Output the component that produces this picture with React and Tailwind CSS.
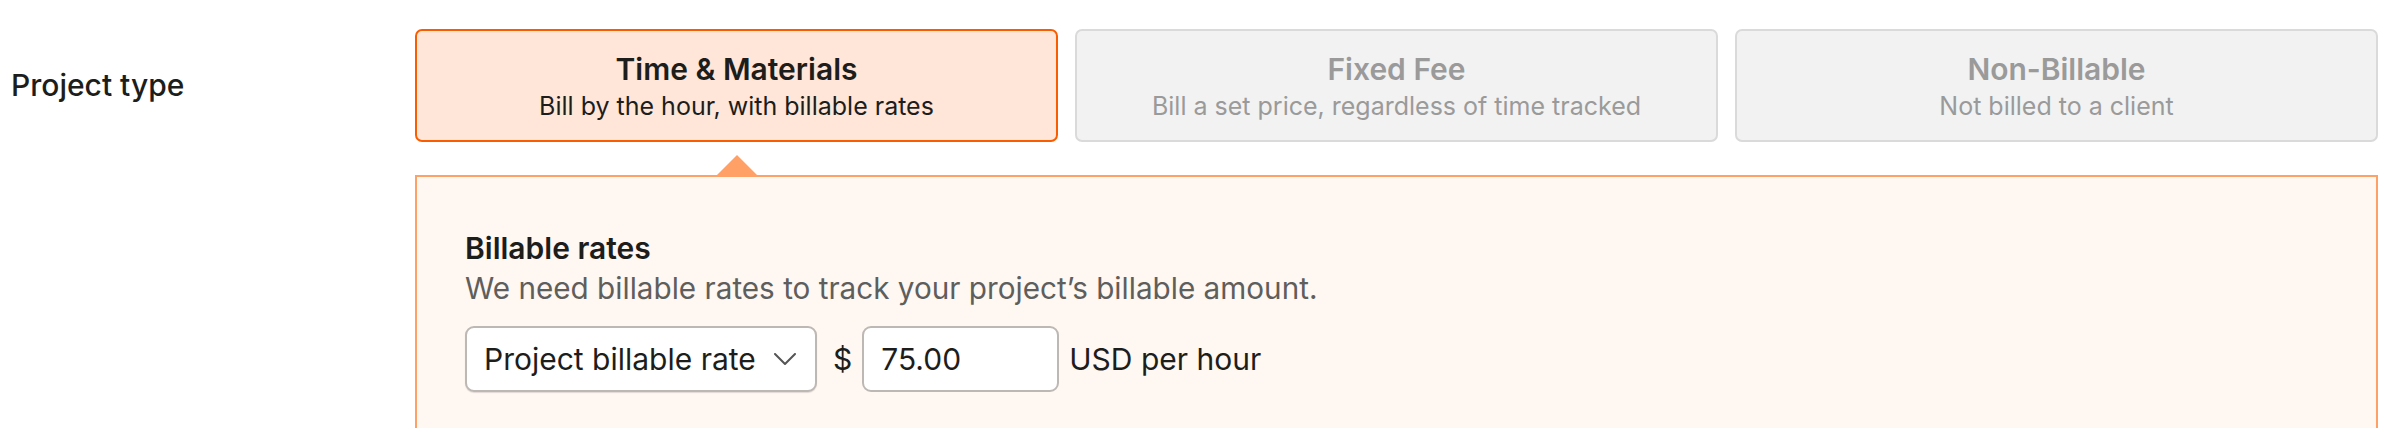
const types = [
  { title: "Time & Materials", sub: "Bill by the hour, with billable rates", active: true },
  { title: "Fixed Fee", sub: "Bill a set price, regardless of time tracked" },
  { title: "Non-Billable", sub: "Not billed to a client" },
];

function TypeCard({ title, sub, active }) {
  return (
    <div
      className={
        active
          ? "h-[113px] rounded-[7px] border-2 border-[#fa5d00] bg-[#ffe6d9] flex flex-col items-center justify-center text-[#1d1d1b]"
          : "h-[113px] rounded-[7px] border-2 border-[#dadada] bg-[#f2f2f2] flex flex-col items-center justify-center text-[#9a9a9a]"
      }
    >
      <p className="text-[30px] leading-[40px] font-semibold">{title}</p>
      <p className="text-[25px] leading-[34px]">{sub}</p>
    </div>
  );
}

function Chevron() {
  return (
    <svg width="22" height="13" viewBox="0 0 22 13" fill="none" className="shrink-0">
      <path d="M1 1l10 10L21 1" stroke="#555" strokeWidth="2" strokeLinecap="round" strokeLinejoin="round" />
    </svg>
  );
}

export default function App() {
  return (
    <div className="min-h-[428px] bg-white font-['Inter',sans-serif] text-[#1d1d1b] overflow-hidden">
      <div className="flex pl-[11px] pr-[30px] pt-[29px]">
        {/* label column */}
        <div className="w-[404px] shrink-0 h-[113px] flex items-center">
          <span className="text-[30px] font-medium">Project type</span>
        </div>

        <div className="flex-1">
          <div className="grid grid-cols-3 gap-[17px]">
            {types.map((t) => (
              <TypeCard key={t.title} {...t} />
            ))}
          </div>

          {/* expanded panel */}
          <div className="relative mt-[33px] h-[300px] border-2 border-[#ffa066] bg-[#fff7f2] px-[48px] pt-[51px]">
            <div className="absolute left-[300px] -top-[22px] w-0 h-0 border-x-[20px] border-x-transparent border-b-[20px] border-b-[#ffa066]" />

            <h3 className="text-[30px] leading-[40px] font-semibold">Billable rates</h3>
            <p className="text-[29.7px] leading-[40px] text-[#5e5e5c]">
              We need billable rates to track your project’s billable amount.
            </p>

            <div className="mt-[18px] flex items-center">
              <div className="h-[66px] w-[352px] rounded-[9px] border-2 border-[#bdb8b4] bg-white shadow-[0_1px_1px_rgba(0,0,0,0.12)] flex items-center justify-between pl-[17px] pr-[19px]">
                <span className="text-[30px]">Project billable rate</span>
                <Chevron />
              </div>
              <span className="ml-[16px] text-[30px]">$</span>
              <div className="ml-[10px] h-[66px] w-[197px] rounded-[9px] border-2 border-[#bdb8b4] bg-white flex items-center pl-[17px]">
                <span className="text-[30px]">75.00</span>
              </div>
              <span className="ml-[10px] text-[30px]">USD per hour</span>
            </div>
          </div>
        </div>
      </div>
    </div>
  );
}
